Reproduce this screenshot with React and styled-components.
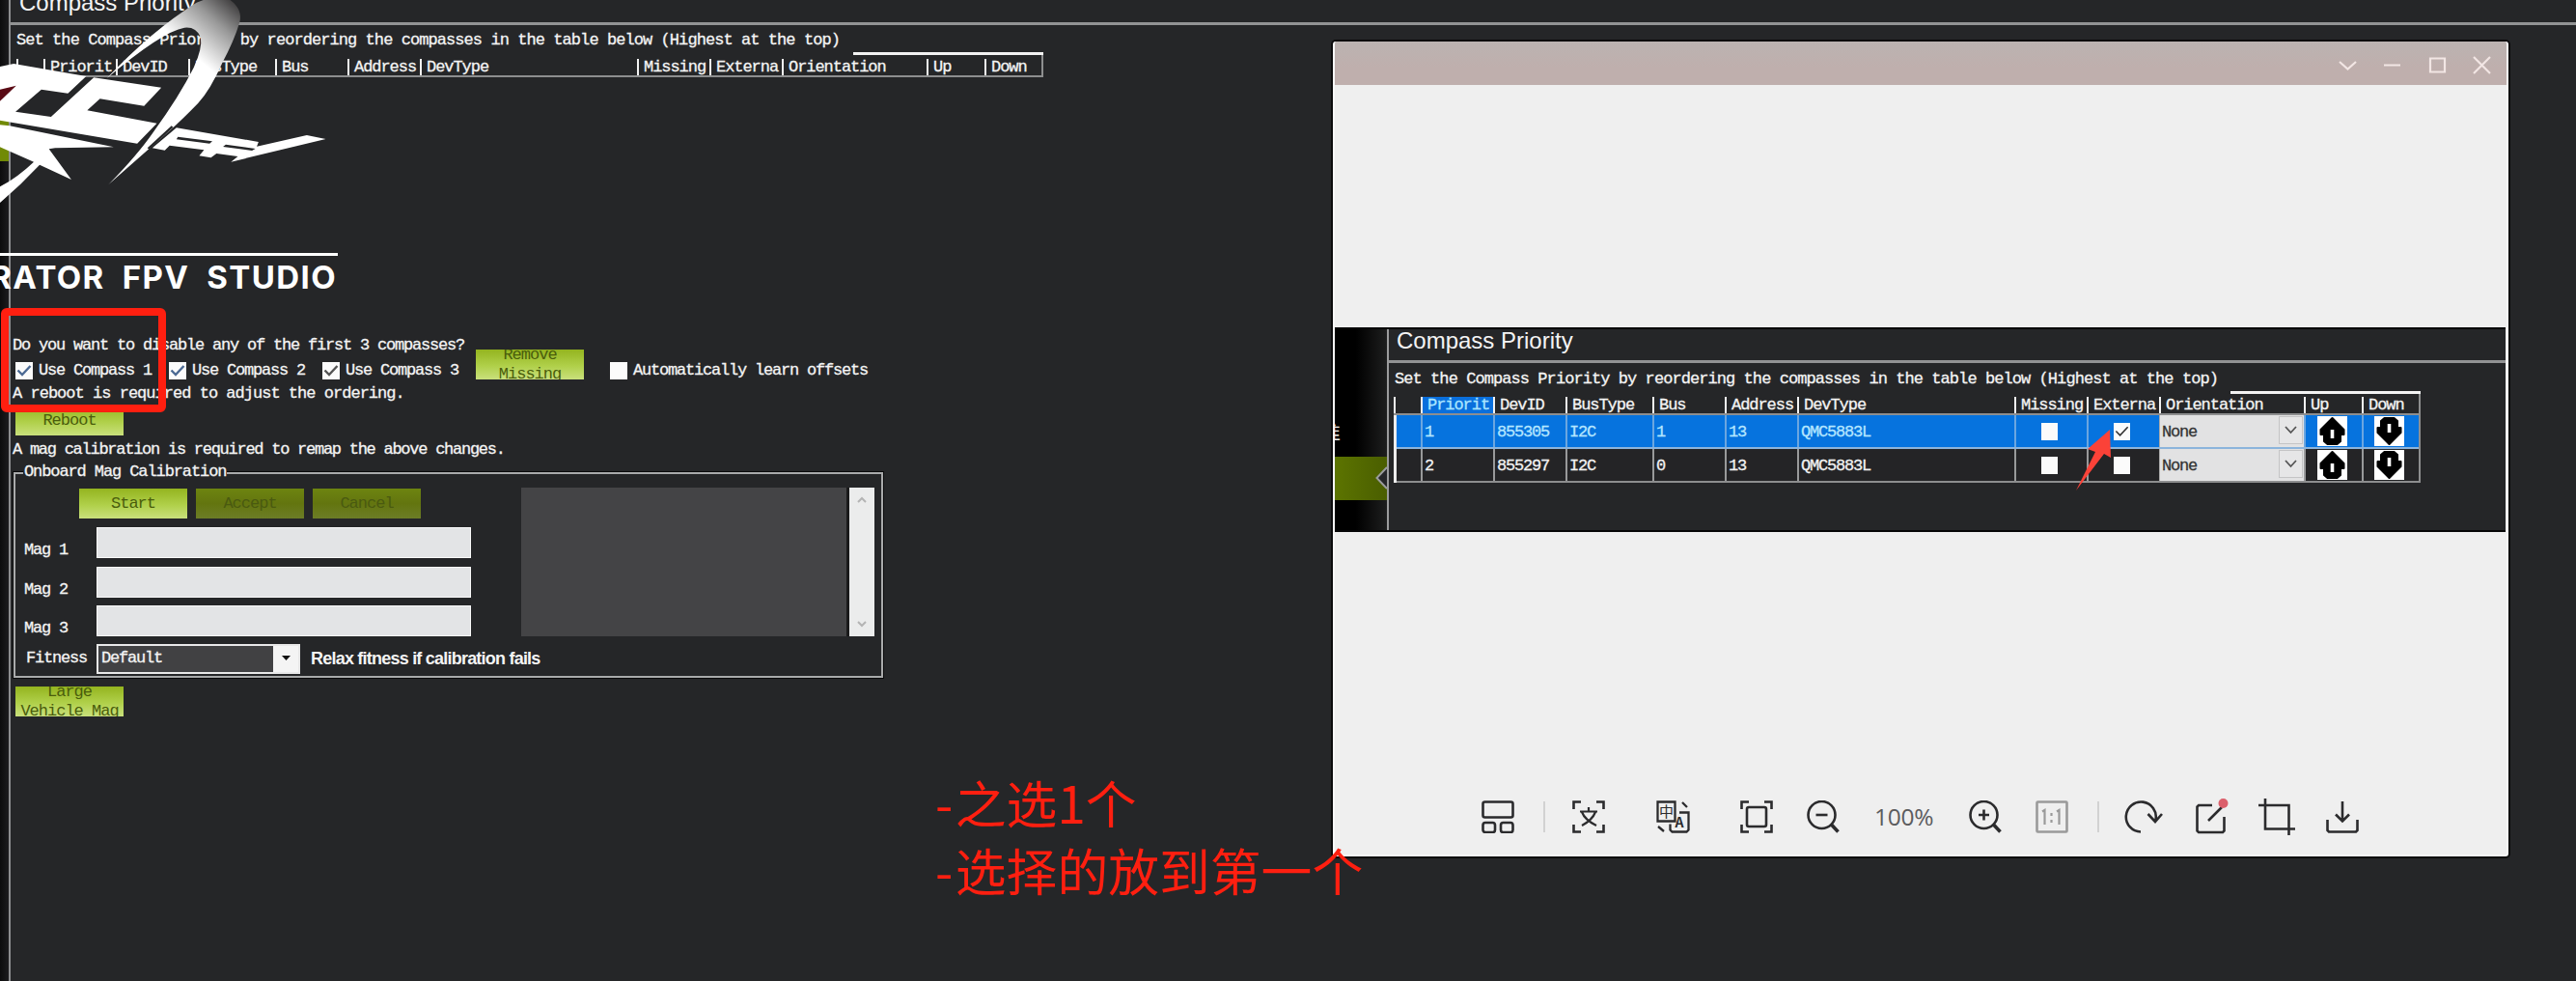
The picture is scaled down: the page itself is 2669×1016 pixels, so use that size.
import React from "react";
import styled, { createGlobalStyle, css } from "styled-components";

const Global = createGlobalStyle`
  * { box-sizing: border-box; }
  body { margin: 0; background: #252628; }
`;

const MONO = '"Liberation Mono", "Noto Sans CJK SC", monospace';

const Desktop = styled.div`
  position: relative;
  display: flex;
  width: 2669px;
  height: 1016px;
  overflow: hidden;
  background: #252628;
  color: #f4f4f4;
  font-family: ${MONO};
`;

const Rail = styled.aside`
  flex: none;
  width: 9px;
  padding-top: 124px;
  background: linear-gradient(90deg, #0c0c0d, #1c1c1e);
`;

const RailTab = styled.div`
  height: 43px;
  background: #718a06;
`;

const Panel = styled.main`
  flex: 1;
  min-width: 0;
  display: flex;
  flex-direction: column;
  align-items: flex-start;
  border-left: 2px solid #8d8e90;
`;

const Text = styled.div`
  flex: none;
  margin-top: ${(p) => p.$top || 0}px;
  padding-left: ${(p) => p.$left || 0}px;
  height: 18px;
  line-height: 18px;
  font-size: 17px;
  letter-spacing: ${(p) => (p.$adv || 9) - 10.2}px;
  white-space: pre;
  -webkit-text-stroke: 0.3px currentColor;
`;

const TitleStrip = styled.header`
  flex: none;
  width: 100%;
  height: ${(p) => p.$height}px;
  padding-left: ${(p) => p.$left}px;
  border-bottom: 3px solid #929394;
  overflow: hidden;
`;

const Title = styled.h1`
  margin: ${(p) => p.$shift}px 0 0;
  font: 400 24px/24px "Liberation Sans", Arial, sans-serif;
  white-space: nowrap;
`;

const HeadRow = styled.div`
  flex: none;
  display: grid;
  grid-template-columns: 28px 75px 75px 90px 75px 75px 225px 75px 75px 150px 60px 61px;
  width: 1064px;
  height: ${(p) => p.$height}px;
  margin: ${(p) => p.$top}px 0 0 ${(p) => p.$left}px;
  padding-top: ${(p) => p.$pad}px;
  border-bottom: 2px solid #8d8e8f;
  background:
    linear-gradient(#f2f2f2, #f2f2f2) 100% 0 / 197px 3px no-repeat,
    linear-gradient(#8d8e8f, #8d8e8f) 100% 0 / 2px 100% no-repeat;
`;

const HeadCell = styled.div`
  height: ${(p) => p.$height}px;
  line-height: ${(p) => p.$height}px;
  padding-left: 5px;
  border-left: 2px solid #f2f2f2;
  overflow: hidden;
  font-size: 17px;
  letter-spacing: -1.05px;
  white-space: pre;
  -webkit-text-stroke: 0.3px currentColor;
  ${(p) => p.$active && css`background: #0a6fdc; color: #a9e4ff;`}
`;

const CheckLine = styled.div`
  flex: none;
  display: flex;
  align-items: flex-end;
  height: 32px;
  margin-left: 5px;
  margin-top: -6px;
`;

const Option = styled.label`
  flex: none;
  display: flex;
  align-items: center;
  gap: 6px;
  width: ${(p) => p.$width}px;
  height: 18px;
  margin-left: ${(p) => p.$gap || 0}px;
`;

const Box = styled.span`
  flex: none;
  display: flex;
  width: ${(p) => p.$size || 18}px;
  height: 18px;
  background: #fbfbfb;
  svg { width: 100%; height: 100%; }
`;

const Button = styled.button`
  flex: none;
  display: flex;
  flex-direction: column;
  align-items: center;
  justify-content: center;
  width: 112px;
  height: 31px;
  margin: ${(p) => p.$margin || 0};
  padding: 0;
  border: 0;
  overflow: hidden;
  color: #4a5d0c;
  background: linear-gradient(#94b41f, #b0d04a 55%, #c9e07c);
  font: 400 17px/20px ${MONO};
  letter-spacing: -1px;
  white-space: pre;
  ${(p) => p.$off && css`background: linear-gradient(#6d8410, #63750f 50%, #6c7d26); color: #4a5a10;`}
`;

const Group = styled.section`
  position: relative;
  flex: none;
  display: flex;
  width: 901px;
  height: 213px;
  margin: 14px 0 0 3px;
  border: 2px solid #a9aaab;
  outline: 1px solid #0a0a0b;
`;

const Legend = styled.div`
  position: absolute;
  left: 8px;
  top: -11px;
  padding: 0 1px;
  background: #252628;
`;

const GroupLeft = styled.div`
  flex: none;
  width: 524px;
  padding-top: 15px;
`;

const ButtonRow = styled.div`
  display: flex;
  gap: 9px;
  padding-left: 66px;
  margin-bottom: 9px;
`;

const Field = styled.div`
  display: flex;
  align-items: flex-start;
  height: ${(p) => p.$height || 40.5}px;
  margin-top: ${(p) => p.$top || 0}px;
  padding-left: ${(p) => p.$left || 9}px;
`;

const FieldName = styled.div`
  flex: none;
  width: ${(p) => p.$width || 75}px;
`;

const Bar = styled.div`
  flex: none;
  width: 388px;
  height: 32px;
  border: 1px solid #fafafa;
  background: #e3e4e6;
`;

const Select = styled.div`
  flex: none;
  display: flex;
  justify-content: space-between;
  align-items: center;
  width: 211px;
  height: 31px;
  padding-left: 3px;
  border: 2px solid #e8e8e8;
  background: #414143;
`;

const SelectArrow = styled.span`
  display: flex;
  align-items: center;
  justify-content: center;
  width: 26px;
  height: 100%;
  background: #f4f4f4;
`;

const Hint = styled.span`
  padding-left: 11px;
  font: 700 18px/30px "Liberation Sans", Arial, sans-serif;
  letter-spacing: -0.78px;
  white-space: nowrap;
`;

const Log = styled.div`
  display: flex;
  justify-content: flex-end;
  width: 366px;
  height: 154px;
  margin-top: 14px;
  background: #444446;
`;

const Scroll = styled.div`
  display: flex;
  flex-direction: column;
  justify-content: space-between;
  align-items: center;
  width: 29px;
  padding: 9px 0;
  border-left: 3px solid #1a1a1b;
  background: #ebecec;
`;

const Brand = styled.div`
  position: absolute;
  left: 0;
  top: 0;
  width: 560px;
  height: 330px;
  overflow: hidden;
  svg { display: block; }
`;

const BrandName = styled.div`
  display: flex;
  justify-content: flex-end;
  gap: 18px;
  width: 350px;
  height: 44px;
  padding: 5px 1px 0 0;
  border-top: 3px solid #fff;
  color: #fff;
  font: 700 33px/34px Inter, sans-serif;
  letter-spacing: 1.4px;
`;

const RedFrame = styled.div`
  position: absolute;
  left: 1px;
  top: 319px;
  width: 171px;
  height: 108px;
  border: 8px solid #ff1f10;
  border-radius: 6px;
`;

const Note = styled.div`
  position: absolute;
  left: 969px;
  top: 795px;
  color: #ff1f10;
  font: 400 52.8px/70px "Noto Sans CJK SC", sans-serif;
  white-space: nowrap;
`;

const Dash = styled.span`
  letter-spacing: 2.5px;
`;

const Viewer = styled.section`
  position: absolute;
  left: 1381px;
  top: 43px;
  display: flex;
  flex-direction: column;
  width: 1218px;
  height: 844px;
  border: 2px solid #f8f8f8;
  border-top: 0;
  border-radius: 3px;
  box-shadow: 0 0 0 2px #0b0b0c;
  background: #efefef;
  overflow: hidden;
`;

const ViewerBar = styled.header`
  flex: none;
  display: flex;
  justify-content: flex-end;
  align-items: center;
  gap: 27.5px;
  height: 45px;
  padding: 3px 16px 0 0;
  background: linear-gradient(#bbb3b1, #bfafad 60%);
  svg { width: 19px; height: 19px; }
`;

const Shot = styled.div`
  flex: none;
  display: flex;
  height: 212px;
  margin-top: 251px;
  margin-right: 1px;
  background: #252628;
  border-top: 2px solid #060607;
  border-bottom: 2px solid #060607;
`;

const ShotRail = styled.div`
  flex: none;
  width: 54px;
  background: linear-gradient(90deg, #000 40%, #1d1e1e);
`;

const ShotWord = styled.div`
  display: flex;
  justify-content: flex-end;
  width: 6px;
  height: 26px;
  margin-top: 92px;
  overflow: hidden;
  color: #eee;
  font: 400 21px/26px "Noto Sans CJK SC", sans-serif;
`;

const ShotTab = styled.div`
  display: flex;
  justify-content: flex-end;
  height: 45px;
  margin-top: 14px;
  background: linear-gradient(90deg, #5c7400, #4a5e00);
`;

const ShotMain = styled.div`
  flex: 1;
  min-width: 0;
  display: flex;
  flex-direction: column;
  border-left: 2px solid #9b9c9d;
`;

const Body = styled.div`
  width: 1064px;
  margin-left: 5px;
  border-left: 3px solid #ededed;
  border-right: 2px solid #8d8e8f;
`;

const Row = styled.div`
  display: grid;
  grid-template-columns: 25px 75px 75px 90px 75px 75px 225px 75px 75px 150px 60px 59px;
  height: 35px;
  border-bottom: 2px solid #8d8e8f;
  background: ${(p) => (p.$active ? "#0673de" : "#242426")};
  color: ${(p) => (p.$active ? "#b5e6ff" : "#f2f2f2")};
  ${(p) => p.$active && css`border-bottom-color: #8cb4dc;`}
`;

const Cell = styled.div`
  display: flex;
  align-items: center;
  justify-content: ${(p) => (p.$center ? "center" : "flex-start")};
  padding-left: ${(p) => (p.$center ? 0 : 2)}px;
  padding-right: ${(p) => (p.$center ? 4 : 0)}px;
  border-left: 2px solid ${(p) => (p.$active ? "#6ba6e0" : "#98999a")};
  &:first-child { border-left: 0; }
  ${Text} { margin-top: 3px; }
`;

const Orient = styled.div`
  display: flex;
  align-items: stretch;
  justify-content: space-between;
  padding-left: 2px;
  border-left: 1px solid #aaa;
  background: #e2e2e3;
  color: #333;
  ${Text} { margin-top: 9px; }
`;

const OrientArrow = styled.span`
  display: flex;
  align-items: center;
  justify-content: center;
  width: 25px;
  margin: 1px 1px 3px 0;
  border: 1px solid #c4c4c5;
  background: #e6e6e7;
`;

const Pointer = styled.svg`
  position: absolute;
  left: 765px;
  top: 400px;
  width: 44px;
  height: 68px;
`;

const Tools = styled.footer`
  display: flex;
  align-items: center;
  height: 38px;
  margin-top: 276px;
  padding-left: 152px;
`;

const Tool = styled.svg`
  flex: none;
  width: ${(p) => p.$w || 34}px;
  height: ${(p) => p.$h || 34}px;
  margin-left: ${(p) => p.$gap || 0}px;
  fill: none;
  stroke: ${(p) => p.$tone || "#2b2b2d"};
  stroke-width: 2.6;
  text { stroke: none; fill: #2b2b2d; font-family: "Noto Sans CJK SC", sans-serif; }
`;

const Rule = styled.span`
  width: 2px;
  height: 32px;
  margin-left: ${(p) => p.$gap}px;
  background: #d2d2d2;
`;

const Percent = styled.span`
  width: 64px;
  margin-left: 36px;
  color: #5c5c5e;
  font: 400 24.5px/34px "Open Sans", sans-serif;
  letter-spacing: -0.3px;
`;

const heads = ["", "Priorit", "DevID", "BusType", "Bus", "Address", "DevType", "Missing", "Externa", "Orientation", "Up", "Down"];
const compasses = [
  { values: ["1", "855305", "I2C", "1", "13", "QMC5883L"], external: true, active: true },
  { values: ["2", "855297", "I2C", "0", "13", "QMC5883L"], external: false, active: false },
];

const INTRO = "Set the Compass Priority by reordering the compasses in the table below (Highest at the top)";

function Tick({ color = "#4c6a94", thin }) {
  return (
    <svg viewBox="0 0 18 18" fill="none" stroke={color} strokeWidth={thin ? 1.7 : 2.4}>
      <path d="M2.5 8.5 7 13 15.5 4" />
    </svg>
  );
}

function TableHead({ active, ...size }) {
  const h = size.$height - size.$pad - 2;
  return (
    <HeadRow {...size}>
      {heads.map((name, i) => (
        <HeadCell key={i} $height={h} $active={active === i}>{name}</HeadCell>
      ))}
    </HeadRow>
  );
}

function MoveIcon({ down }) {
  return (
    <svg width="31" height="31" viewBox="0 0 31 31">
      <rect width="31" height="31" fill="#fff" />
      <g transform={down ? "rotate(180 15.5 15.5)" : undefined}>
        <path d="M15.5 2 27.500 14v5H24v7l-3.500 3h-10L7 26v-7H3.500v-5z" fill="#000" stroke="#000" strokeWidth="2" strokeLinejoin="round" />
        <rect x="13.7" y="14" width="3.6" height="9" fill="#fff" />
      </g>
    </svg>
  );
}

function Chevron() {
  return (
    <svg width="13" height="9" viewBox="0 0 13 9" fill="none" stroke="#555" strokeWidth="1.8">
      <path d="m1 1 5.500 6L12 1" />
    </svg>
  );
}

function Logo() {
  return (
    <svg width="560" height="262" viewBox="0 0 1568 786" preserveAspectRatio="none">
      <defs>
        <linearGradient id="swoosh" gradientUnits="userSpaceOnUse" x1="710" y1="10" x2="560" y2="170">
          <stop offset="0" stopColor="#2c2a2b" />
          <stop offset="0.45" stopColor="#989898" />
          <stop offset="1" stopColor="#fff" />
        </linearGradient>
      </defs>
      <g fill="#fff">
        <path d="M0 207 40 198 250 237 197 290 120 278 45 347 148 363 272 241 468 272 418 329 290 307 253 343 455 383 398 446 0 374z" />
        <path d="M0 388 28 391 330 457 160 460 142 463 207 558 115 512Q60 575 0 630V580Q50 552 98 503L0 457z" />
        <path d="M512 397 750 441 745 455 890 420 945 432 670 503 690 486 628 477 612 490 578 484 592 466 492 452 478 467 442 460z" />
      </g>
      <path d="M0 278 47 266 0 314z" fill="#5a0a14" />
      <path d="m516 425 100 14-8 7-96-13zM655 449l86 13-10 6-84-12z" fill="#252628" />
      <path d="M310 243Q440 95 570 8L590 0H668Q705 30 695 70 680 125 645 195 610 280 575 320 530 370 490 408L315 573Q400 480 445 410 520 300 562 210 588 150 582 115 568 82 535 86 470 98 310 243z" fill="url(#swoosh)" />
      <path d="M500 393 430 462" stroke="#252628" strokeWidth="7" />
    </svg>
  );
}

function Corners() {
  return <path d="M1.500 9V1.500H9M25 1.500h7.500V9M32.500 25v7.500H25M9 32.500H1.500V25" />;
}

function CompassTable() {
  return (
    <>
      <TableHead $top={3} $left={5} $height={25} $pad={6} active={1} />
      <Body>
        {compasses.map(({ values, external, active }) => (
          <Row key={values[0]} $active={active}>
            <Cell />
            {values.map((v, i) => (
              <Cell key={i} $active={active}><Text>{v}</Text></Cell>
            ))}
            <Cell $center $active={active}><Box $size={17} /></Cell>
            <Cell $center $active={active}><Box $size={17}>{external && <Tick color="#333" thin />}</Box></Cell>
            <Orient>
              <Text>None</Text>
              <OrientArrow><Chevron /></OrientArrow>
            </Orient>
            <Cell $center $active={active}><MoveIcon /></Cell>
            <Cell $center $active={active}><MoveIcon down /></Cell>
          </Row>
        ))}
      </Body>
    </>
  );
}

function Calibration() {
  return (
    <Group>
      <Legend><Text $adv={9.1}>Onboard Mag Calibration</Text></Legend>
      <GroupLeft>
        <ButtonRow>
          <Button>Start</Button>
          <Button $off>Accept</Button>
          <Button $off>Cancel</Button>
        </ButtonRow>
        {[1, 2, 3].map((n) => (
          <Field key={n}>
            <FieldName><Text $top={15}>{"Mag " + n}</Text></FieldName>
            <Bar />
          </Field>
        ))}
        <Field $height={31} $left={11} $top={-1}>
          <FieldName $width={73}><Text $top={6}>Fitness</Text></FieldName>
          <Select>
            <Text>Default</Text>
            <SelectArrow>
              <svg width="9" height="6" viewBox="0 0 9 6"><path d="M0 0h9L4.500 5z" fill="#111" /></svg>
            </SelectArrow>
          </Select>
          <Hint>Relax fitness if calibration fails</Hint>
        </Field>
      </GroupLeft>
      <Log>
        <Scroll>
          <svg width="12" height="8" viewBox="0 0 12 8" fill="none" stroke="#b4b4b4" strokeWidth="2"><path d="M2 6 6 2l4 4" /></svg>
          <svg width="12" height="8" viewBox="0 0 12 8" fill="none" stroke="#b4b4b4" strokeWidth="2"><path d="m2 2 4 4 4-4" /></svg>
        </Scroll>
      </Log>
    </Group>
  );
}

function Toolbar() {
  return (
    <Tools>
      <Tool viewBox="0 0 34 34">
        <rect x="1.500" y="1.500" width="31" height="16" rx="2" />
        <rect x="1.500" y="23" width="12.500" height="10" rx="2.500" />
        <rect x="20" y="23" width="12.500" height="10" rx="2.500" />
      </Tool>
      <Rule $gap={30} />
      <Tool $gap={28} viewBox="0 0 34 34"><Corners /><path d="M8 11.500h18M17 7v4M10 26Q21 20 24 12M10 12Q13 20 25 26" strokeWidth="2.2" /></Tool>
      <Tool $gap={53} $w={35} viewBox="0 0 35 34">
        <path d="M14 21.500H1.500V1.500h18V12M19.500 12v9.500H13" strokeWidth="2.3" />
        <path d="M24 12.500h9.500v18l-2 2h-15l-2-2v-6M27 2l5 5M2 27l6 5" strokeWidth="2.300" />
        <text x="3" y="17" fontSize="15">中</text>
        <text x="19.500" y="28" fontSize="14" fontWeight="700">A</text>
      </Tool>
      <Tool $gap={52} viewBox="0 0 34 34"><Corners /><rect x="7" y="7" width="20" height="20" rx="2" /></Tool>
      <Tool $gap={35} viewBox="0 0 34 34"><circle cx="15.500" cy="15" r="14" /><path d="M9.500 15h12" /><path d="m25.500 25 7 7.500" strokeWidth="3.6" /></Tool>
      <Percent>100%</Percent>
      <Tool $gap={34} viewBox="0 0 34 34"><circle cx="15.500" cy="15" r="14" /><path d="M10 15h11M15.500 9.500v11" /><path d="m25.500 25 7 7.500" strokeWidth="3.6" /></Tool>
      <Tool $gap={35} $tone="#9a9a9a" viewBox="0 0 34 34"><rect x="1.500" y="1.500" width="31" height="31" rx="1" /><path d="M7 11.500 9.500 10v15M22 11.500l2.500-1.500v15M16.500 13v3M16.500 20v3" strokeWidth="2.200" /></Tool>
      <Rule $gap={30} />
      <Tool $gap={26} $w={40} viewBox="0 0 40 34"><path d="M17 32.500A15.500 15.500 0 1 1 32.500 20M24.500 14l7.500 8 7-8" /></Tool>
      <Tool $gap={34} $w={35} $h={38} viewBox="0 0 35 38"><path d="M17 7H3L1.500 8.500v25L3 35h25l1.500-1.500V19M13 23 27 9" /><circle cx="28.500" cy="5" r="5" fill="#db5f6b" stroke="none" /></Tool>
      <Tool $gap={30} $w={38} $h={38} viewBox="0 0 38 38"><path d="M7 0v31.500h31M0 7h31.500v31" /></Tool>
      <Tool $gap={32} viewBox="0 0 34 34"><path d="M1.500 20v11l1.500 1.500h28l1.500-1.500V20M17 1v20M10 14.500l7 7 7-7" /></Tool>
    </Tools>
  );
}

function PhotoViewer() {
  return (
    <Viewer>
      <ViewerBar>
        {["m1 6 8.500 7.500L18 6", "M1 9.500h17", "M2 2.500h15v14H2z", "M1 1l17 17M18 1 1 18"].map((d) => (
          <svg key={d} viewBox="0 0 19 19" fill="none" stroke="#f2e6e4" strokeWidth="2.200"><path d={d} /></svg>
        ))}
      </ViewerBar>
      <Shot>
        <ShotRail>
          <ShotWord>准</ShotWord>
          <ShotTab>
            <svg width="12" height="45" viewBox="0 0 12 45"><path d="M12 11 1.500 22 12 33" fill="#252628" stroke="#9b9c9d" strokeWidth="2" /></svg>
          </ShotTab>
        </ShotRail>
        <ShotMain>
          <TitleStrip $height={35} $left={8}><Title $shift={0}>Compass Priority</Title></TitleStrip>
          <Text $top={8} $left={6} $adv={9.27}>{INTRO}</Text>
          <CompassTable />
        </ShotMain>
      </Shot>
      <Toolbar />
      <Pointer viewBox="0 0 44 68"><path d="M38 2 15 22l8 3L3 65 32 27l7 4z" fill="#fb4238" /></Pointer>
    </Viewer>
  );
}

function CompassOptions() {
  return (
    <CheckLine>
      <Option $width={159}><Box><Tick /></Box><Text>Use Compass 1</Text></Option>
      <Option $width={159}><Box><Tick /></Box><Text>Use Compass 2</Text></Option>
      <Option $width={159}><Box><Tick color="#555" /></Box><Text>Use Compass 3</Text></Option>
      <Button><span>Remove</span><span>Missing</span></Button>
      <Option $width={280} $gap={27}><Box /><Text>Automatically learn offsets</Text></Option>
    </CheckLine>
  );
}

export default function App() {
  return (
    <>
      <Global />
      <Desktop>
        <Rail><RailTab /></Rail>
        <Panel>
          <TitleStrip $height={26} $left={9}><Title $shift={-9}>Compass Priority</Title></TitleStrip>
          <Text $top={7} $left={6} $adv={9.27}>{INTRO}</Text>
          <TableHead $top={3} $left={6} $height={26} $pad={7} />
          <Text $top={269} $left={2}>Do you want to disable any of the first 3 compasses?</Text>
          <CompassOptions />
          <Text $top={6} $left={2} $adv={9.22}>A reboot is required to adjust the ordering.</Text>
          <Button $margin="3px 0 0 5px">Reboot</Button>
          <Text $top={6} $left={2} $adv={8.94}>A mag calibration is required to remap the above changes.</Text>
          <Calibration />
          <Button $margin="9px 0 0 5px"><span>Large</span><span>Vehicle Mag</span></Button>
        </Panel>
        <Brand>
          <Logo />
          <BrandName><span>RATOR</span><span>FPV</span><span>STUDIO</span></BrandName>
        </Brand>
        <PhotoViewer />
        <RedFrame />
        <Note>
          <Dash>-</Dash>之选1个<br />
          <Dash>-</Dash>选择的放到第一个
        </Note>
      </Desktop>
    </>
  );
}
